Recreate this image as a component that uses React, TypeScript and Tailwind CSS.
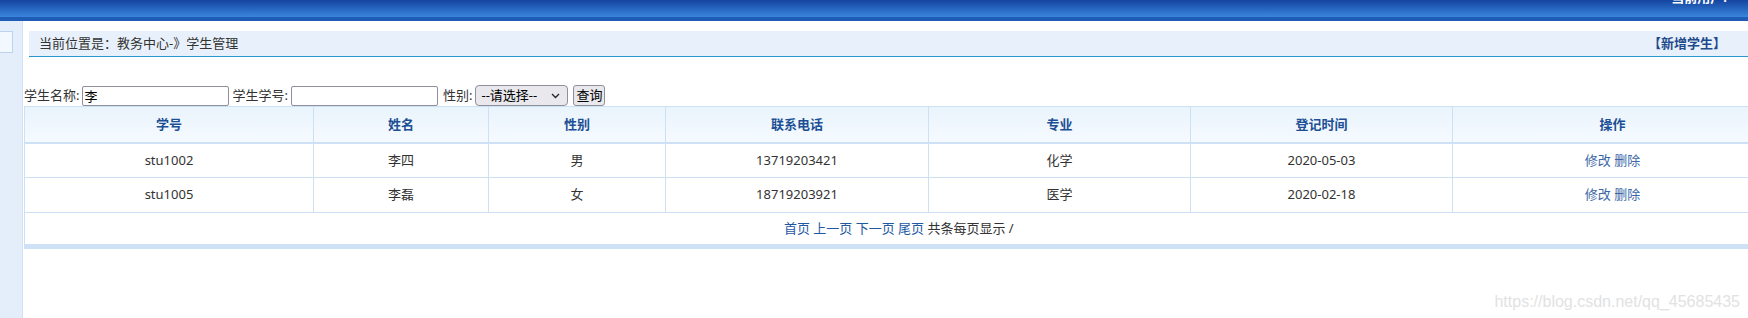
import React from 'react';

interface Student {
    id: string;
    name: string;
    gender: string;
    phone: string;
    major: string;
    date: string;
}

const students: Student[] = [
    { id: 'stu1002', name: '李四', gender: '男', phone: '13719203421', major: '化学', date: '2020-05-03' },
    { id: 'stu1005', name: '李磊', gender: '女', phone: '18719203921', major: '医学', date: '2020-02-18' },
];

const columns = ['学号', '姓名', '性别', '联系电话', '专业', '登记时间', '操作'];
const colWidths = ['w-[289px]', 'w-[175px]', 'w-[177px]', 'w-[263px]', 'w-[262px]', 'w-[262px]', 'w-[320px]'];

const font = "font-['Noto_Sans','Noto_Sans_CJK_SC',sans-serif]";

const App: React.FC = () => {
    return (
        <div className={`relative w-[1748px] h-[318px] overflow-hidden bg-white text-[#333] ${font}`}>
            {/* top bar */}
            <header className="h-[21px] flex flex-col">
                <div className="h-[17px] bg-gradient-to-b from-[#1544a0] to-[#3a86dc] flex justify-end pr-[21px] overflow-hidden">
                    <span className="-mt-[11px] text-[13px] font-bold text-white leading-[17px]">当前用户:</span>
                </div>
                <div className="h-[4px] bg-[#1f5cb6]" />
            </header>

            <div className="flex">
                {/* left panel */}
                <aside className="w-[23px] h-[297px] shrink-0 bg-[#e4eefa] border-r border-[#d3e2f4] pt-[10px]">
                    <div className="w-[13px] h-[22px] bg-[#f3f8fe] border border-l-0 border-[#bcd3ef]" />
                </aside>

                <main className="flex-1 min-w-0 pt-[10px]">
                    {/* breadcrumb */}
                    <div className="ml-[6px] h-[26px] bg-[#e8f1fb] border-b border-[#2a97cf] flex items-center justify-between pl-[10px] pr-[22px] text-[13px]">
                        <span>当前位置是：教务中心-》学生管理</span>
                        <a className="font-bold text-[#1f4a8c] cursor-pointer">【新增学生】</a>
                    </div>

                    {/* search */}
                    <div className="mt-[28px] ml-px h-[21px] flex items-center text-[13px]">
                        <label>学生名称:</label>
                        <input
                            defaultValue="李"
                            className="ml-[3px] w-[147px] h-[20px] border border-[#8f8f9d] rounded-[2px] px-[1px] text-[13px] text-black outline-none"
                        />
                        <label className="ml-[3px]">学生学号:</label>
                        <input className="ml-[3px] w-[147px] h-[20px] border border-[#8f8f9d] rounded-[2px] px-[1px] text-[13px] outline-none" />
                        <label className="ml-[5px]">性别:</label>
                        <div className="relative ml-[3px]">
                            <select className="appearance-none w-[93px] h-[21px] border border-[#8f8f9d] rounded-[4px] bg-[#e9e9ed] pl-[5px] text-[13px] text-black outline-none">
                                <option>--请选择--</option>
                                <option>男</option>
                                <option>女</option>
                            </select>
                            <svg className="pointer-events-none absolute right-[8px] top-[8px]" width="9" height="6" viewBox="0 0 9 6">
                                <path d="M1 1 L4.5 4.5 L8 1" fill="none" stroke="#222" strokeWidth="1.3" />
                            </svg>
                        </div>
                        <button className="ml-[5px] h-[21px] px-[2px] border border-[#8f8f9d] rounded-[3px] bg-[#e9e9ed] text-[13px] text-black leading-none">
                            查询
                        </button>
                    </div>

                    {/* table */}
                    <table className="ml-px w-[1748px] table-fixed border-collapse text-[13px] border-l border-[#cde0f4]">
                        <colgroup>
                            {colWidths.map((w, i) => (
                                <col key={i} className={w} />
                            ))}
                        </colgroup>
                        <thead>
                            <tr className="h-[36px] bg-gradient-to-b from-[#eaf4fc] to-[#f5faff]">
                                {columns.map((c) => (
                                    <th key={c} className="border border-[#cde0f4] border-b-2 font-bold text-[#1c4f94] text-center">
                                        {c}
                                    </th>
                                ))}
                            </tr>
                        </thead>
                        <tbody>
                            {students.map((s) => (
                                <tr key={s.id} className="h-[35px]">
                                    <td className="border border-[#cde0f4] text-center">{s.id}</td>
                                    <td className="border border-[#cde0f4] text-center">{s.name}</td>
                                    <td className="border border-[#cde0f4] text-center">{s.gender}</td>
                                    <td className="border border-[#cde0f4] text-center">{s.phone}</td>
                                    <td className="border border-[#cde0f4] text-center">{s.major}</td>
                                    <td className="border border-[#cde0f4] text-center">{s.date}</td>
                                    <td className="border border-[#cde0f4] text-center text-[#3b67a6]">
                                        <a className="cursor-pointer">修改</a> <a className="cursor-pointer">删除</a>
                                    </td>
                                </tr>
                            ))}
                            <tr className="h-[34px]">
                                <td colSpan={7} className="text-center border-b-[5px] border-[#cfe1f6]">
                                    <span className="text-[#1d58a3]">首页 上一页 下一页 尾页</span> 共条每页显示 /
                                </td>
                            </tr>
                        </tbody>
                    </table>
                </main>
            </div>

            <div className="absolute right-[8px] top-[290px] text-[16px] text-[#e2e2e2] font-['Liberation_Sans',sans-serif]">
                https://blog.csdn.net/qq_45685435
            </div>
        </div>
    );
};

export default App;
